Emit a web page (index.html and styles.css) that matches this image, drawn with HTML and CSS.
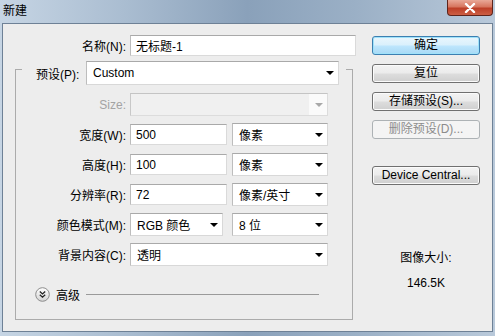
FILE: index.html
```html
<!DOCTYPE html>
<html>
<head>
<meta charset="UTF-8">
<title>新建</title>
<link rel="stylesheet" href="styles.css">
</head>
<body>
<div class="window">
	<div class="titlebar">
		<span class="title">新建</span>
		<span class="close">
			<svg width="12" height="10" viewBox="0 0 12 10"><path d="M2 1 L10 9 M10 1 L2 9" stroke="#fff" stroke-width="2.4" stroke-linecap="round"/></svg>
		</span>
	</div>
	<div class="client">
		<div class="main">
			<div class="name-row">
				<label>名称(N):</label>
				<input class="field name" type="text" value="无标题-1">
			</div>
			<div class="group">
				<div class="preset">
					<label>预设(P):</label>
					<div class="select preset-select"><span>Custom</span><i class="arrow"></i></div>
				</div>
				<div class="row">
					<label class="off">Size:</label>
					<div class="select wide disabled"><span></span><span class="drop"><i class="arrow"></i></span></div>
				</div>
				<div class="row">
					<label>宽度(W):</label>
					<input class="field num" type="text" value="500">
					<div class="select unit"><span>像素</span><i class="arrow"></i></div>
				</div>
				<div class="row">
					<label>高度(H):</label>
					<input class="field num" type="text" value="100">
					<div class="select unit"><span>像素</span><i class="arrow"></i></div>
				</div>
				<div class="row">
					<label>分辨率(R):</label>
					<input class="field num" type="text" value="72">
					<div class="select unit"><span>像素/英寸</span><i class="arrow"></i></div>
				</div>
				<div class="row">
					<label>颜色模式(M):</label>
					<div class="select mode"><span>RGB 颜色</span><i class="arrow"></i></div>
					<div class="select unit bits"><span>8 位</span><i class="arrow"></i></div>
				</div>
				<div class="row">
					<label>背景内容(C):</label>
					<div class="select wide"><span>透明</span><i class="arrow"></i></div>
				</div>
				<div class="advanced">
					<svg width="15" height="15" viewBox="0 0 15 15">
						<defs>
							<linearGradient id="knob" x1="0" y1="0" x2="0" y2="1">
								<stop offset="0" stop-color="#ffffff"/>
								<stop offset="1" stop-color="#d4d4d4"/>
							</linearGradient>
						</defs>
						<circle cx="7.5" cy="7.5" r="6.8" fill="url(#knob)" stroke="#8c8c8c"/>
						<path d="M4.8 4.6 L7.5 7 L10.2 4.6 M4.8 7.8 L7.5 10.2 L10.2 7.8" fill="none" stroke="#222" stroke-width="1.3"/>
					</svg>
					<span class="adv-text">高级</span>
					<span class="rule"></span>
				</div>
			</div>
		</div>
		<div class="side">
			<button class="btn default">确定</button>
			<button class="btn">复位</button>
			<button class="btn">存储预设(S)...</button>
			<button class="btn" disabled>删除预设(D)...</button>
			<button class="btn central">Device Central...</button>
			<p class="info">图像大小:</p>
			<p class="info size">146.5K</p>
		</div>
	</div>
</div>
</body>
</html>
```

FILE: styles.css
```css
body {
	margin: 0;
	font: 12px "Liberation Sans", "Noto Sans CJK SC", sans-serif;
	color: #000;
}

.window {
	width: 495px;
	height: 336px;
	box-sizing: border-box;
	padding: 0 2px 4px 2px;
	display: flex;
	flex-direction: column;
	background: linear-gradient(90deg, #c6d5e4 0%, #aabdd1 25%, #8aa1ba 50%, #9bb0c6 72%, #b9c9da 100%);
}

.titlebar {
	height: 23px;
	display: flex;
	justify-content: space-between;
	align-items: flex-start;
}

.title {
	padding: 4px 0 0 1px;
	line-height: 14px;
}

.close {
	width: 44px;
	height: 15px;
	border: 1px solid #5e241b;
	border-top: none;
	border-radius: 0 0 4px 4px;
	background: linear-gradient(#e9a897, #d7765f 45%, #bd3f27 55%, #cc5f45);
	display: flex;
	align-items: center;
	justify-content: center;
}

.client {
	flex: 1;
	display: flex;
	border: 1px solid #6e8196;
	background: #ededed;
	padding: 11px 0 0 12px;
}

.main {
	width: 341px;
}

.name-row {
	display: flex;
	align-items: center;
	height: 21px;
}

.name-row label {
	width: 111px;
	padding-right: 4px;
	text-align: right;
}

.field {
	height: 21px;
	box-sizing: border-box;
	margin: 0;
	border: 1px solid;
	border-color: #a9a9a9 #dadada #dadada #bcbcbc;
	background: #fff;
	padding: 0 0 0 5px;
	font: inherit;
	color: #000;
	outline: none;
}

.name {
	width: 226px;
}

.group {
	margin-top: 13px;
	width: 338px;
	box-sizing: border-box;
	border: 1px solid #ababab;
	padding-bottom: 17px;
}

.preset {
	display: flex;
	align-items: center;
	height: 24px;
	width: 324px;
	box-sizing: border-box;
	margin: -9px 0 0 6px;
	padding: 0 7px 0 14px;
	background: #ededed;
}

.preset label {
	width: 50px;
}

.select {
	height: 23px;
	box-sizing: border-box;
	border: 1px solid;
	border-color: #a9a9a9 #d8d8d8 #d8d8d8 #bdbdbd;
	background: #fff;
	display: flex;
	align-items: center;
	justify-content: space-between;
	padding: 0 4px 0 6px;
}

.preset-select {
	width: 253px;
	height: 24px;
}

.arrow {
	border-left: 4px solid transparent;
	border-right: 4px solid transparent;
	border-top: 4px solid #000;
}

.row {
	display: flex;
	align-items: center;
	height: 23px;
	margin-top: 7px;
}

.preset + .row {
	margin-top: 8px;
}

.row label {
	width: 110px;
	padding-right: 4px;
	text-align: right;
}

.row .off {
	color: #a3a3a3;
}

.wide {
	width: 198px;
}

.disabled {
	background: #f0f0f0;
	border-color: #c4c4c4 #dcdcdc #dcdcdc #c8c8c8;
	padding: 0;
	align-items: stretch;
}

.drop {
	width: 18px;
	background: #fafafa;
	display: flex;
	align-items: center;
	justify-content: center;
}

.disabled .arrow {
	border-top-color: #a8a8a8;
	margin-left: 1px;
}

.num {
	width: 97px;
	margin-right: 5px;
}

.unit {
	width: 96px;
}

.mode {
	width: 93px;
	margin-right: 9px;
}

.advanced {
	display: flex;
	align-items: center;
	height: 15px;
	margin: 21px 0 0 19px;
}

.adv-text {
	margin-left: 6px;
}

.rule {
	width: 233px;
	margin-left: 6px;
	border-top: 1px solid #9a9a9a;
}

.side {
	width: 108px;
	margin-left: 16px;
	padding-top: 1px;
	display: flex;
	flex-direction: column;
	align-items: center;
}

.btn {
	width: 108px;
	height: 19px;
	margin: 0 0 9px 0;
	padding: 0;
	border: 1px solid #707070;
	border-radius: 3px;
	background: linear-gradient(#f3f3f3 0%, #ebebeb 48%, #dddddd 52%, #cfcfcf 100%);
	box-shadow: inset 0 0 0 1px #fbfbfb;
	font: inherit;
	color: #000;
	line-height: 15px;
}

.default {
	border-color: #3c7fb1;
	background: linear-gradient(#eaf6fd 0%, #d9f0fc 48%, #bee6fd 52%, #a7d9f5 100%);
	box-shadow: inset 0 0 0 1px #9fe2fa;
}

.btn:disabled {
	border-color: #adb2b5;
	background: #f4f4f4;
	box-shadow: none;
	color: #8c8c8c;
}

.central {
	margin-top: 18px;
}

.info {
	margin: 56px 0 0 0;
	line-height: 16px;
}

.size {
	margin-top: 9px;
}
```
